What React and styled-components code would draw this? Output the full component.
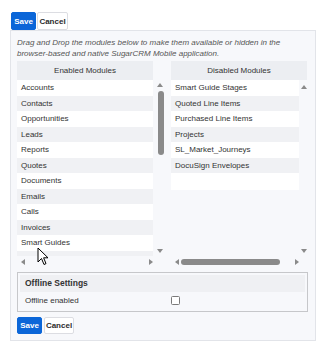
import React from 'react';
import styled, { createGlobalStyle } from 'styled-components';

const GlobalStyle = createGlobalStyle`
  body {
    margin: 0;
    background: #ffffff;
    font-family: "Liberation Sans", Arial, sans-serif;
    color: #333;
  }
`;

const enabled = [
  'Accounts', 'Contacts', 'Opportunities', 'Leads', 'Reports', 'Quotes',
  'Documents', 'Emails', 'Calls', 'Invoices', 'Smart Guides', 'Tasks',
];

const disabled = [
  'Smart Guide Stages', 'Quoted Line Items', 'Purchased Line Items',
  'Projects', 'SL_Market_Journeys', 'DocuSign Envelopes',
];

const Page = styled.div`
  position: relative;
  padding: 12px 0 0 10px;
  width: 306px;
`;

const ButtonRow = styled.div`
  display: flex;
  gap: ${p => p.$gap || 1}px;
  padding-left: ${p => p.$indent || 0}px;
  height: ${p => p.$h}px;
`;

const Button = styled.button`
  width: ${p => p.$w}px;
  height: 100%;
  padding: 0;
  border: 1px solid ${p => (p.$primary ? '#0b66d8' : '#dcdde2')};
  border-radius: 2px;
  background: ${p => (p.$primary ? '#0b66d8' : '#ffffff')};
  color: ${p => (p.$primary ? '#ffffff' : '#2b2b2b')};
  font-family: "Liberation Sans", Arial, sans-serif;
  font-size: 8px;
  font-weight: bold;
`;

const Panel = styled.div`
  border: 1px solid #e2e4e9;
  background: #f7f8fb;
  padding: 6px 7px 6px 6px;
`;

const Description = styled.p`
  margin: 0 0 2px;
  font-size: 8px;
  line-height: 11px;
  font-style: italic;
  color: #555;
`;

const Columns = styled.div`
  display: flex;
  gap: 5px;
`;

const Column = styled.div`
  width: ${p => p.$w}px;
`;

const Header = styled.div`
  width: 136px;
  height: 19px;
  background: #eceef2;
  display: flex;
  align-items: center;
  justify-content: center;
  font-size: 8px;
  color: #333;
`;

const Body = styled.div`
  display: grid;
  grid-template-columns: ${p => p.$list}px 1fr;
  grid-template-rows: 176px 11px;
`;

const Viewport = styled.div`
  overflow: hidden;
`;

const List = styled.div`
  background: #ffffff;
  padding-bottom: ${p => p.$pad || 0}px;
`;

const Row = styled.div`
  height: 15.5px;
  line-height: 15.5px;
  padding-left: 4px;
  font-size: 8px;
  color: #333;
  white-space: nowrap;
  background: ${p => (p.$odd ? '#f0f1f4' : '#ffffff')};
`;

const VScroll = styled.div`
  position: relative;
  display: flex;
  flex-direction: column;
  align-items: ${p => p.$align || 'center'};
  padding: 3px 0 3px;
`;

const Arrow = styled.span`
  width: 0;
  height: 0;
  border-style: solid;
  ${p => p.$dir === 'up' && 'border-width: 0 3px 4px 3px; border-color: transparent transparent #8a8a8a transparent;'}
  ${p => p.$dir === 'down' && 'border-width: 4px 3px 0 3px; border-color: #8a8a8a transparent transparent transparent;'}
  ${p => p.$dir === 'left' && 'border-width: 3px 4px 3px 0; border-color: transparent #8a8a8a transparent transparent;'}
  ${p => p.$dir === 'right' && 'border-width: 3px 0 3px 4px; border-color: transparent transparent transparent #8a8a8a;'}
`;

const VThumb = styled.div`
  width: 6px;
  height: 64px;
  margin-top: 4px;
  border-radius: 3px;
  background: #8a8a8a;
`;

const Spacer = styled.div`
  flex: 1;
`;

const HScroll = styled.div`
  display: flex;
  align-items: center;
  gap: 2px;
  padding: 0 ${p => p.$right}px 0 ${p => p.$left}px;
`;

const HThumb = styled.div`
  width: ${p => p.$w}px;
  height: 6px;
  border-radius: 3px;
  background: #8a8a8a;
`;

const Offline = styled.div`
  margin-top: 5px;
  border: 1px solid #c6c7ca;
  padding: 2px;
`;

const OfflineHeader = styled.div`
  height: 17px;
  line-height: 17px;
  padding-left: 5px;
  background: #eff0f3;
  font-size: 8.5px;
  font-weight: bold;
  color: #333;
`;

const OfflineRow = styled.div`
  display: grid;
  grid-template-columns: 146px 1fr;
  align-items: center;
  height: 17px;
  padding-left: 5px;
  font-size: 8px;
  color: #333;
`;

const Check = styled.span`
  width: 7px;
  height: 7px;
  border: 1px solid #7a7a7a;
  border-radius: 1.5px;
  background: #ffffff;
`;

const Bottom = styled.div`
  margin-top: 5px;
`;

const Cursor = styled.svg`
  position: absolute;
  left: 37px;
  top: 247px;
`;

export default function App() {
  return (
    <>
      <GlobalStyle />
      <Page>
        <ButtonRow $indent={1} $h={18}>
          <Button $primary $w={25}>Save</Button>
          <Button $w={31}>Cancel</Button>
        </ButtonRow>
        <Panel>
          <Description>
            Drag and Drop the modules below to make them available or hidden in the
            browser-based and native SugarCRM Mobile application.
          </Description>
          <Columns>
            <Column $w={149}>
              <Header>Enabled Modules</Header>
              <Body $list={136}>
                <Viewport>
                  <List>
                    {enabled.map((m, i) => (
                      <Row key={m} $odd={i % 2 === 1}>{m}</Row>
                    ))}
                  </List>
                </Viewport>
                <VScroll $align="flex-end">
                  <Arrow $dir="up" style={{ marginRight: 3 }} />
                  <VThumb style={{ marginRight: 2 }} />
                  <Spacer />
                  <Arrow $dir="down" style={{ marginRight: 3 }} />
                </VScroll>
                <HScroll $left={4} $right={0}>
                  <Arrow $dir="left" />
                  <Spacer />
                  <Arrow $dir="right" />
                </HScroll>
              </Body>
            </Column>
            <Column $w={137}>
              <Header>Disabled Modules</Header>
              <Body $list={128}>
                <Viewport>
                  <List $pad={17}>
                    {disabled.map((m, i) => (
                      <Row key={m} $odd={i % 2 === 1}>{m}</Row>
                    ))}
                  </List>
                </Viewport>
                <VScroll>
                  <Arrow $dir="up" style={{ marginTop: 2 }} />
                  <Spacer />
                  <Arrow $dir="down" />
                </VScroll>
                <HScroll $left={4} $right={0}>
                  <Arrow $dir="left" />
                  <HThumb $w={99} />
                  <Spacer />
                  <Arrow $dir="right" />
                </HScroll>
              </Body>
            </Column>
          </Columns>
          <Offline>
            <OfflineHeader>Offline Settings</OfflineHeader>
            <OfflineRow>
              <span>Offline enabled</span>
              <Check />
            </OfflineRow>
          </Offline>
          <Bottom>
            <ButtonRow $gap={2} $h={17}>
              <Button $primary $w={25}>Save</Button>
              <Button $w={30}>Cancel</Button>
            </ButtonRow>
          </Bottom>
        </Panel>
        <Cursor width="12" height="19" viewBox="0 0 12 19">
          <path
            d="M1 1 L1 15 L4.5 11.5 L7 17.5 L9 16.6 L6.6 10.8 L11 10.8 Z"
            fill="#ffffff"
            stroke="#000000"
            strokeWidth="1"
            strokeLinejoin="round"
          />
        </Cursor>
      </Page>
    </>
  );
}
